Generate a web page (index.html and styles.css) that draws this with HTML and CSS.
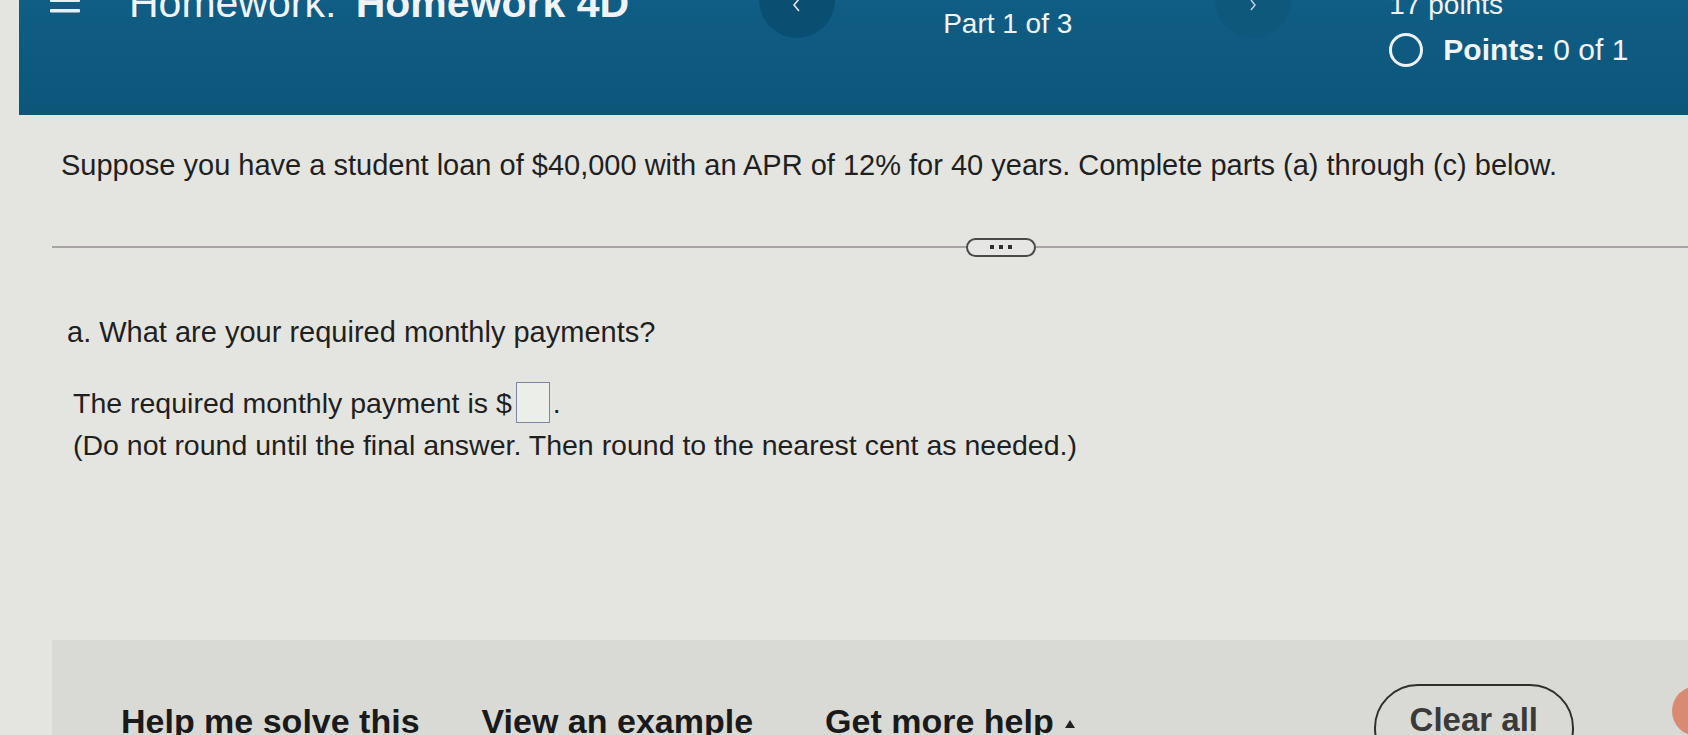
FILE: index.html
```html
<!DOCTYPE html>
<html lang="en">
<head>
  <meta charset="UTF-8">
  <meta name="viewport" content="width=device-width, initial-scale=1.0">
  <title>Homework 4D</title>
  <link rel="stylesheet" href="styles.css">
</head>
<body>
  <div class="page">
    <header class="topbar">
      <div class="menu">
        <svg width="30" height="14" viewBox="0 0 30 14">
          <rect x="0" y="-1" width="30" height="3" rx="1" fill="#e9eef2"/>
          <rect x="0" y="9" width="30" height="3.5" rx="1" fill="#e9eef2"/>
        </svg>
      </div>
      <h1 class="hw-title">Homework: <b>Homework 4D</b></h1>

      <div class="part-nav">
        <div class="nav-btn prev">
          <svg width="10" height="14" viewBox="0 0 10 14"><path d="M7 1 L2 7 L7 13" fill="none" stroke="#dfe8ee" stroke-width="1.6"/></svg>
        </div>
        <span class="part-label">Part 1 of 3</span>
        <div class="nav-btn next">
          <svg width="8" height="12" viewBox="0 0 8 12"><path d="M2 1 L6 6 L2 11" fill="none" stroke="#c9d6df" stroke-width="1.4"/></svg>
        </div>
      </div>

      <div class="score">
        <div class="total">17 points</div>
        <div class="points"><span class="ring"></span><b>Points:</b>&nbsp;0 of 1</div>
      </div>
    </header>

    <main class="content">
      <p class="question">Suppose you have a student loan of $40,000 with an APR of 12% for 40 years. Complete parts (a) through (c) below.</p>

      <div class="divider">
        <span class="divider-line left"></span>
        <span class="more-btn"><i></i><i></i><i></i></span>
        <span class="divider-line"></span>
      </div>

      <p class="part-q">a. What are your required monthly payments?</p>
      <p class="answer">The required monthly payment is $<span class="answer-box"></span>.</p>
      <p class="note">(Do not round until the final answer. Then round to the nearest cent as needed.)</p>

      <div class="helpbar">
        <a class="help-link">Help me solve this</a>
        <a class="help-link">View an example</a>
        <a class="help-link more">Get more help <span class="caret"></span></a>
        <button class="clear-btn">Clear all</button>
        <span class="chat-fab"></span>
      </div>
    </main>
  </div>
</body>
</html>
```

FILE: styles.css
```css
body {
  margin: 0;
  background: #e4e5e1;
  font-family: "Liberation Sans", Arial, sans-serif;
  color: #1f1f1f;
}
.page {
  width: 1688px;
  height: 735px;
  overflow: hidden;
  position: relative;
}

/* top bar */
.topbar {
  margin-left: 19px;
  height: 115px;
  background: linear-gradient(180deg, #105d85, #0c567a);
  color: #f1f4f6;
  display: flex;
  align-items: flex-start;
  overflow: hidden;
}
.menu {
  margin-left: 31px;
  width: 30px;
}
.menu svg {
  display: block;
}
.hw-title {
  margin: -17px 0 0 49px;
  font-size: 41px;
  font-weight: normal;
  line-height: 41px;
  white-space: nowrap;
}
.hw-title b {
  margin-left: 8px;
}
.part-nav {
  display: flex;
  align-items: flex-start;
  margin-left: 130px;
}
.nav-btn {
  width: 76px;
  height: 76px;
  margin-top: -38px;
  border-radius: 50%;
  background: #0a4e71;
  display: flex;
  justify-content: center;
  align-items: center;
  padding-top: 10px;
  box-sizing: border-box;
}
.nav-btn.next {
  margin-left: 143px;
  background: #0e587c;
}
.part-label {
  margin: 8px 0 0 108px;
  font-size: 28px;
  line-height: 32px;
  white-space: nowrap;
}
.score {
  margin-left: 98px;
  white-space: nowrap;
}
.total {
  font-size: 28px;
  line-height: 32px;
  margin-top: -11px;
}
.points {
  display: flex;
  align-items: center;
  margin-top: 11px;
  font-size: 30px;
  line-height: 36px;
}
.ring {
  width: 28px;
  height: 28px;
  border: 3px solid #eef1f3;
  border-radius: 50%;
  margin-right: 20px;
}

/* question */
.content {
  padding-left: 52px;
}
.question, .part-q, .answer, .note {
  font-size: 29px;
  line-height: 36px;
  white-space: nowrap;
}
.question {
  margin: 32px 0 0 9px;
}
.divider {
  margin-top: 54px;
  height: 20px;
  display: flex;
  align-items: center;
}
.divider-line {
  flex: 1;
  height: 2px;
  background: #a8a4a6;
}
.divider-line.left {
  flex: none;
  width: 914px;
}
.more-btn {
  width: 70px;
  height: 19px;
  box-sizing: border-box;
  border: 2px solid #4a4a4a;
  border-radius: 10px;
  background: #e6e7e4;
  display: flex;
  justify-content: center;
  align-items: center;
  gap: 5px;
}
.more-btn i {
  width: 4px;
  height: 4px;
  background: #2f2f2f;
}
.part-q {
  margin: 57px 0 0 15px;
}
.answer {
  margin: 32px 0 0 21px;
  font-size: 28.5px;
}
.answer-box {
  display: inline-block;
  width: 34px;
  height: 41px;
  box-sizing: border-box;
  border: 1.5px solid #7b86a3;
  background: #eceeea;
  vertical-align: -10px;
  margin: 0 3px 0 4px;
}
.note {
  margin: 4px 0 0 21px;
  font-size: 28.5px;
}

/* help bar */
.helpbar {
  position: relative;
  margin-top: 177px;
  height: 120px;
  background: #d9dad6;
  display: flex;
  align-items: flex-start;
  gap: 62px;
  padding: 44px 114px 0 69px;
}
.help-link {
  margin-top: 17px;
  font-size: 34px;
  font-weight: bold;
  line-height: 40px;
  color: #1a1a1a;
  white-space: nowrap;
}
.help-link.more {
  margin-left: 10px;
}
.caret {
  display: inline-block;
  border-left: 5px solid transparent;
  border-right: 5px solid transparent;
  border-bottom: 8px solid #222;
  vertical-align: 5px;
  margin-left: 2px;
}
.clear-btn {
  margin-left: auto;
  padding: 14px 34px 30px;
  border: 2.5px solid #2e2e2e;
  border-radius: 44px;
  background: transparent;
  font-family: inherit;
  font-size: 33px;
  font-weight: bold;
  line-height: 40px;
  color: #3a3a3a;
}
.chat-fab {
  position: absolute;
  right: -34px;
  top: 46px;
  width: 50px;
  height: 50px;
  border-radius: 50%;
  background: #d88a73;
}
```
